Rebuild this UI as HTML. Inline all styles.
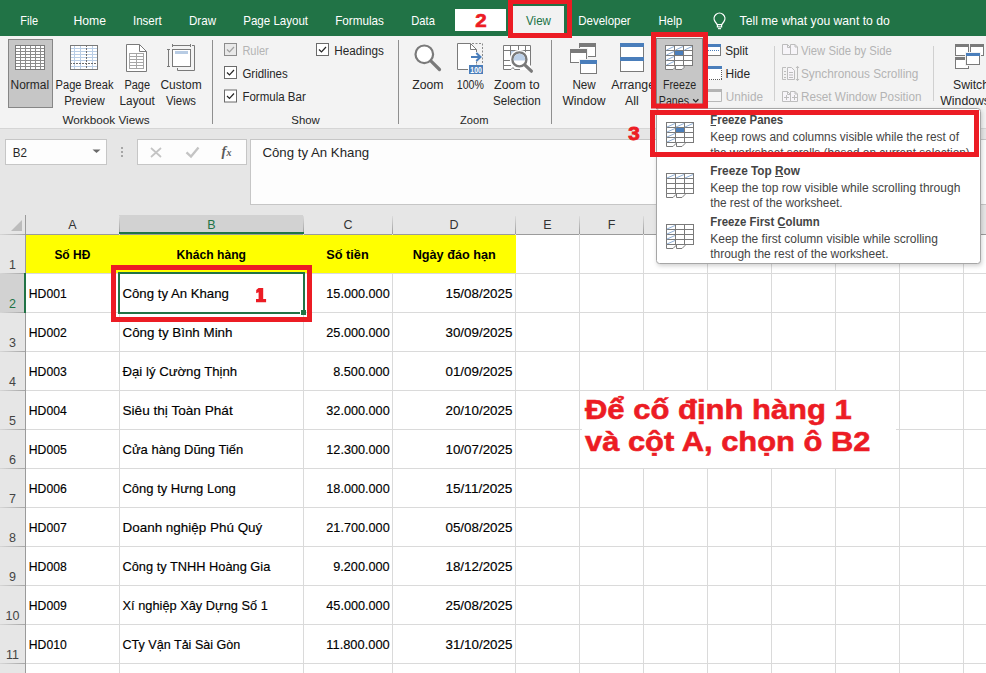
<!DOCTYPE html>
<html><head><meta charset="utf-8"><title>Excel Freeze Panes</title>
<style>
html,body{margin:0;padding:0;background:#fff;overflow:hidden;}
svg{display:block;font-family:"Liberation Sans",sans-serif;}
</style></head><body>
<svg width="986" height="673" viewBox="0 0 986 673">
<rect x="0" y="0" width="986" height="673" fill="#ffffff"/>
<rect x="0" y="36" width="986" height="92" fill="#f3f3f3"/>
<rect x="0" y="128" width="986" height="106" fill="#e6e6e6"/>
<line x1="0" y1="128.5" x2="986" y2="128.5" stroke="#d5d5d5" stroke-width="1"/>
<rect x="0" y="0" width="986" height="36" fill="#217346"/>
<text x="20.3" y="25.2" font-size="13" fill="#ffffff" textLength="17.7" lengthAdjust="spacingAndGlyphs">File</text>
<text x="73.5" y="25.2" font-size="13" fill="#ffffff" textLength="32.5" lengthAdjust="spacingAndGlyphs">Home</text>
<text x="133.0" y="25.2" font-size="13" fill="#ffffff" textLength="28.8" lengthAdjust="spacingAndGlyphs">Insert</text>
<text x="189.0" y="25.2" font-size="13" fill="#ffffff" textLength="27.0" lengthAdjust="spacingAndGlyphs">Draw</text>
<text x="243.2" y="25.2" font-size="13" fill="#ffffff" textLength="64.9" lengthAdjust="spacingAndGlyphs">Page Layout</text>
<text x="335.2" y="25.2" font-size="13" fill="#ffffff" textLength="48.7" lengthAdjust="spacingAndGlyphs">Formulas</text>
<text x="411.3" y="25.2" font-size="13" fill="#ffffff" textLength="23.6" lengthAdjust="spacingAndGlyphs">Data</text>
<rect x="455" y="9" width="51" height="22" fill="#ffffff"/>
<text x="475.3" y="27.1" font-size="19" fill="#ec1c24" font-weight="bold" textLength="11.4" lengthAdjust="spacingAndGlyphs" stroke="#ec1c24" stroke-width="0.7">2</text>
<rect x="513" y="6" width="51" height="28" fill="#f2f2f2"/>
<text x="526.1" y="24.8" font-size="13" fill="#217346" textLength="24.9" lengthAdjust="spacingAndGlyphs">View</text>
<rect x="510.5" y="1.5" width="59" height="34" fill="none" stroke="#ec1c24" stroke-width="5"/>
<text x="578.2" y="25.2" font-size="13" fill="#ffffff" textLength="52.5" lengthAdjust="spacingAndGlyphs">Developer</text>
<text x="658.6" y="25.2" font-size="13" fill="#ffffff" textLength="23.5" lengthAdjust="spacingAndGlyphs">Help</text>
<path d="M717.3 24.6 L715.1 21.6 A5.4 5.4 0 1 1 723.9 21.6 L721.7 24.6" fill="none" stroke="#ffffff" stroke-width="1.3"/>
<rect x="717.4" y="24.6" width="4.2" height="2.3" fill="none" stroke="#ffffff" stroke-width="1.2"/>
<rect x="718" y="28.1" width="3" height="1.1" fill="#ffffff"/>
<text x="739.6" y="24.9" font-size="13" fill="#ffffff" textLength="150.1" lengthAdjust="spacingAndGlyphs">Tell me what you want to do</text>
<rect x="8.5" y="39.5" width="44" height="68" fill="#c6c6c6" stroke="#868686" stroke-width="1"/>
<rect x="15" y="45" width="30" height="25" fill="#ffffff"/>
<line x1="20.5" y1="45" x2="20.5" y2="70" stroke="#8c8c8c" stroke-width="1"/>
<line x1="25.5" y1="45" x2="25.5" y2="70" stroke="#8c8c8c" stroke-width="1"/>
<line x1="30.5" y1="45" x2="30.5" y2="70" stroke="#8c8c8c" stroke-width="1"/>
<line x1="35.5" y1="45" x2="35.5" y2="70" stroke="#8c8c8c" stroke-width="1"/>
<line x1="40.5" y1="45" x2="40.5" y2="70" stroke="#8c8c8c" stroke-width="1"/>
<line x1="15" y1="48.5" x2="45" y2="48.5" stroke="#8c8c8c" stroke-width="1"/>
<line x1="15" y1="51.5" x2="45" y2="51.5" stroke="#8c8c8c" stroke-width="1"/>
<line x1="15" y1="54.5" x2="45" y2="54.5" stroke="#8c8c8c" stroke-width="1"/>
<line x1="15" y1="57.5" x2="45" y2="57.5" stroke="#8c8c8c" stroke-width="1"/>
<line x1="15" y1="60.5" x2="45" y2="60.5" stroke="#8c8c8c" stroke-width="1"/>
<line x1="15" y1="63.5" x2="45" y2="63.5" stroke="#8c8c8c" stroke-width="1"/>
<line x1="15" y1="66.5" x2="45" y2="66.5" stroke="#8c8c8c" stroke-width="1"/>
<rect x="15.5" y="45.5" width="29" height="24" fill="none" stroke="#7a7a7a" stroke-width="1"/>
<text x="10.6" y="89.0" font-size="12" fill="#262626" textLength="38.5" lengthAdjust="spacingAndGlyphs">Normal</text>
<rect x="70" y="45" width="28" height="25" fill="#ffffff"/>
<line x1="74.5" y1="45" x2="74.5" y2="70" stroke="#b9cde5" stroke-width="1"/>
<line x1="80.5" y1="45" x2="80.5" y2="70" stroke="#b9cde5" stroke-width="1"/>
<line x1="92.5" y1="45" x2="92.5" y2="70" stroke="#b9cde5" stroke-width="1"/>
<line x1="70" y1="48.5" x2="98" y2="48.5" stroke="#b9cde5" stroke-width="1"/>
<line x1="70" y1="51.5" x2="98" y2="51.5" stroke="#b9cde5" stroke-width="1"/>
<line x1="70" y1="54.5" x2="98" y2="54.5" stroke="#b9cde5" stroke-width="1"/>
<line x1="70" y1="57.5" x2="98" y2="57.5" stroke="#b9cde5" stroke-width="1"/>
<line x1="70" y1="60.5" x2="98" y2="60.5" stroke="#b9cde5" stroke-width="1"/>
<line x1="70" y1="66.5" x2="98" y2="66.5" stroke="#b9cde5" stroke-width="1"/>
<line x1="86.5" y1="45" x2="86.5" y2="70" stroke="#6d6d6d" stroke-width="1" stroke-dasharray="2 1"/>
<line x1="70" y1="63.5" x2="98" y2="63.5" stroke="#6d6d6d" stroke-width="1" stroke-dasharray="2 1"/>
<rect x="70.5" y="45.5" width="27" height="24" fill="none" stroke="#7a7a7a" stroke-width="1"/>
<text x="55.6" y="89.0" font-size="12" fill="#262626" textLength="57.9" lengthAdjust="spacingAndGlyphs">Page Break</text>
<text x="64.2" y="105.0" font-size="12" fill="#262626" textLength="40.5" lengthAdjust="spacingAndGlyphs">Preview</text>
<path d="M126.5 44.5 H139.5 L146.5 51.5 V71.5 H126.5 Z" fill="#ffffff" stroke="#7a7a7a" stroke-width="1"/>
<path d="M139.5 44.5 V51.5 H146.5" fill="none" stroke="#7a7a7a" stroke-width="1"/>
<rect x="129.5" y="53.5" width="14" height="15" fill="#ffffff" stroke="#a6a6a6" stroke-width="1"/>
<line x1="136.5" y1="53.5" x2="136.5" y2="68.5" stroke="#a6a6a6" stroke-width="1"/>
<line x1="129.5" y1="56.5" x2="143.5" y2="56.5" stroke="#a6a6a6" stroke-width="1"/>
<line x1="129.5" y1="59.5" x2="143.5" y2="59.5" stroke="#a6a6a6" stroke-width="1"/>
<line x1="129.5" y1="62.5" x2="143.5" y2="62.5" stroke="#a6a6a6" stroke-width="1"/>
<line x1="129.5" y1="65.5" x2="143.5" y2="65.5" stroke="#a6a6a6" stroke-width="1"/>
<text x="124.4" y="89.0" font-size="12" fill="#262626" textLength="25.6" lengthAdjust="spacingAndGlyphs">Page</text>
<text x="119.6" y="105.0" font-size="12" fill="#262626" textLength="35.2" lengthAdjust="spacingAndGlyphs">Layout</text>
<line x1="172.5" y1="45.5" x2="190.5" y2="45.5" stroke="#7a7a7a" stroke-width="1"/>
<line x1="172.5" y1="44" x2="172.5" y2="47" stroke="#7a7a7a" stroke-width="1"/>
<line x1="190.5" y1="44" x2="190.5" y2="47" stroke="#7a7a7a" stroke-width="1"/>
<line x1="168.5" y1="49.5" x2="168.5" y2="66.5" stroke="#7a7a7a" stroke-width="1"/>
<line x1="167" y1="49.5" x2="170" y2="49.5" stroke="#7a7a7a" stroke-width="1"/>
<line x1="167" y1="66.5" x2="170" y2="66.5" stroke="#7a7a7a" stroke-width="1"/>
<rect x="172.5" y="49.5" width="18" height="17" fill="#ffffff" stroke="#7a7a7a" stroke-width="1"/>
<rect x="175" y="51" width="13" height="3" fill="#b8cce4"/>
<path d="M192 45.5 H194.5 V70.5 H177.5 V68" fill="none" stroke="#7a7a7a" stroke-width="1"/>
<text x="160.4" y="89.0" font-size="12" fill="#262626" textLength="41.2" lengthAdjust="spacingAndGlyphs">Custom</text>
<text x="166.0" y="105.0" font-size="12" fill="#262626" textLength="30.0" lengthAdjust="spacingAndGlyphs">Views</text>
<text x="62.4" y="124.0" font-size="11.5" fill="#262626" textLength="87.2" lengthAdjust="spacingAndGlyphs">Workbook Views</text>
<line x1="212.5" y1="40" x2="212.5" y2="124" stroke="#8f8f8f" stroke-width="1"/>
<rect x="224.5" y="43.5" width="12" height="12" fill="#e9e9e9" stroke="#8c8c8c" stroke-width="1"/>
<path d="M227 49.5 L229.5 52 L234 47" fill="none" stroke="#a0a0a0" stroke-width="1.2"/>
<text x="242.4" y="55.0" font-size="12" fill="#b4b4b4" textLength="26.4" lengthAdjust="spacingAndGlyphs">Ruler</text>
<rect x="224.5" y="66.5" width="12" height="12" fill="#ffffff" stroke="#6a6a6a" stroke-width="1"/>
<path d="M227 72.5 L229.5 75 L234 70" fill="none" stroke="#262626" stroke-width="1.2"/>
<text x="242.4" y="78.0" font-size="12" fill="#262626" textLength="45.3" lengthAdjust="spacingAndGlyphs">Gridlines</text>
<rect x="224.5" y="90.0" width="12" height="12" fill="#ffffff" stroke="#6a6a6a" stroke-width="1"/>
<path d="M227 96.0 L229.5 98.5 L234 93.5" fill="none" stroke="#262626" stroke-width="1.2"/>
<text x="242.4" y="101.0" font-size="12" fill="#262626" textLength="63.4" lengthAdjust="spacingAndGlyphs">Formula Bar</text>
<rect x="316.5" y="43.5" width="12" height="12" fill="#ffffff" stroke="#6a6a6a" stroke-width="1"/>
<path d="M319 49.5 L321.5 52 L326 47" fill="none" stroke="#262626" stroke-width="1.2"/>
<text x="334.3" y="55.0" font-size="12" fill="#262626" textLength="49.5" lengthAdjust="spacingAndGlyphs">Headings</text>
<text x="291.3" y="124.0" font-size="11.5" fill="#262626" textLength="28.5" lengthAdjust="spacingAndGlyphs">Show</text>
<line x1="398.5" y1="40" x2="398.5" y2="124" stroke="#8f8f8f" stroke-width="1"/>
<circle cx="424.3" cy="54.3" r="8.8" fill="#ffffff" stroke="#7a7a7a" stroke-width="2.2"/>
<line x1="430.8" y1="60.8" x2="439.5" y2="69.5" stroke="#7a7a7a" stroke-width="3.2" stroke-linecap="round"/>
<text x="412.2" y="89.0" font-size="12" fill="#262626" textLength="31.3" lengthAdjust="spacingAndGlyphs">Zoom</text>
<path d="M457.5 43.5 H470.5 L476.5 49.5 V69.5 H457.5 Z" fill="#ffffff"/>
<path d="M468 69.5 H457.5 V43.5 H470.5 L476.5 49.5 V52" fill="none" stroke="#7a7a7a" stroke-width="1"/>
<path d="M470.5 43.5 V49.5 H476.5" fill="none" stroke="#7a7a7a" stroke-width="1"/>
<line x1="476.5" y1="61.5" x2="476.5" y2="65" stroke="#7a7a7a" stroke-width="1" stroke-dasharray="2 1"/>
<path d="M472 43.5 H482.5 V63" fill="none" stroke="#8a8a8a" stroke-width="1" stroke-dasharray="2 1.5"/>
<line x1="471" y1="57" x2="480.5" y2="57" stroke="#4a7ebb" stroke-width="2"/>
<path d="M476.3 53 L480.5 57 L476.3 61" fill="none" stroke="#4a7ebb" stroke-width="2"/>
<rect x="469" y="65" width="14" height="9" fill="#4a7ebb"/>
<text x="470.3" y="72.6" font-size="8.5" fill="#ffffff" font-weight="bold" textLength="11.5" lengthAdjust="spacingAndGlyphs">100</text>
<text x="456.8" y="89.0" font-size="12" fill="#262626" textLength="27.1" lengthAdjust="spacingAndGlyphs">100%</text>
<rect x="503" y="45" width="28" height="25" fill="#ffffff"/>
<rect x="511" y="51" width="7" height="9" fill="#bcd0e8"/>
<path d="M503.5 69.5 V45.5 H530.5 V65.5" fill="none" stroke="#7a7a7a" stroke-width="1"/>
<line x1="503.5" y1="50.5" x2="530.5" y2="50.5" stroke="#7a7a7a" stroke-width="1"/>
<line x1="510.5" y1="45.5" x2="510.5" y2="58" stroke="#7a7a7a" stroke-width="1"/>
<line x1="518.5" y1="45.5" x2="518.5" y2="58" stroke="#7a7a7a" stroke-width="1"/>
<line x1="525.5" y1="45.5" x2="525.5" y2="58" stroke="#7a7a7a" stroke-width="1"/>
<line x1="503.5" y1="60.5" x2="511" y2="60.5" stroke="#7a7a7a" stroke-width="1"/>
<line x1="503.5" y1="65.5" x2="511" y2="65.5" stroke="#7a7a7a" stroke-width="1"/>
<path d="M503.5 69.5 H511 L513 67.5 L514.5 69.5 H520" fill="none" stroke="#7a7a7a" stroke-width="1"/>
<circle cx="519.4" cy="59.4" r="9.6" fill="#ffffff"/>
<circle cx="519.4" cy="59.4" r="7" fill="#ffffff" stroke="#7a7a7a" stroke-width="2.4"/>
<path d="M513.7 60.6 A5.8 5.8 0 1 1 525.1 60.6 Z" fill="#bcd0e8"/>
<line x1="525.3" y1="65.3" x2="531.4" y2="71.2" stroke="#7a7a7a" stroke-width="3.2" stroke-linecap="round"/>
<text x="494.1" y="89.0" font-size="12" fill="#262626" textLength="45.5" lengthAdjust="spacingAndGlyphs">Zoom to</text>
<text x="493.0" y="105.0" font-size="12" fill="#262626" textLength="47.7" lengthAdjust="spacingAndGlyphs">Selection</text>
<text x="460.0" y="124.0" font-size="11.5" fill="#262626" textLength="28.4" lengthAdjust="spacingAndGlyphs">Zoom</text>
<line x1="551.5" y1="40" x2="551.5" y2="124" stroke="#8f8f8f" stroke-width="1"/>
<rect x="579.5" y="43.5" width="16" height="13" fill="#ffffff" stroke="#7a7a7a" stroke-width="1"/>
<rect x="579" y="43" width="17" height="4" fill="#7a7a7a"/>
<rect x="569" y="48" width="19" height="16" fill="#f3f3f3"/>
<rect x="570.5" y="49.5" width="16" height="13" fill="#ffffff" stroke="#7a7a7a" stroke-width="1"/>
<rect x="570" y="49" width="17" height="4" fill="#7a7a7a"/>
<rect x="579" y="59" width="19" height="16" fill="#f3f3f3"/>
<rect x="580.5" y="60.5" width="16" height="13" fill="#ffffff" stroke="#7a7a7a" stroke-width="1"/>
<rect x="580" y="60" width="17" height="4" fill="#4a7ebb"/>
<text x="572.4" y="89.0" font-size="12" fill="#262626" textLength="23.3" lengthAdjust="spacingAndGlyphs">New</text>
<text x="562.4" y="105.0" font-size="12" fill="#262626" textLength="43.1" lengthAdjust="spacingAndGlyphs">Window</text>
<rect x="620.5" y="43.5" width="23" height="28" fill="#ffffff" stroke="#7a7a7a" stroke-width="1"/>
<rect x="620" y="43" width="24" height="4" fill="#4a7ebb"/>
<rect x="620" y="57" width="24" height="4" fill="#4a7ebb"/>
<text x="611.2" y="89.0" font-size="12" fill="#262626" textLength="43.8" lengthAdjust="spacingAndGlyphs">Arrange</text>
<text x="625.0" y="105.0" font-size="12" fill="#262626" textLength="13.8" lengthAdjust="spacingAndGlyphs">All</text>
<rect x="656.5" y="38.5" width="46" height="70" fill="#c6c6c6" stroke="#868686" stroke-width="1"/>
<rect x="665.5" y="45.5" width="27" height="20" fill="#ffffff" stroke="#7a7a7a" stroke-width="1"/>
<line x1="674.5" y1="45.5" x2="674.5" y2="65.5" stroke="#7a7a7a" stroke-width="1"/>
<line x1="683.5" y1="45.5" x2="683.5" y2="65.5" stroke="#7a7a7a" stroke-width="1"/>
<line x1="665.5" y1="50.5" x2="692.5" y2="50.5" stroke="#7a7a7a" stroke-width="1"/>
<line x1="665.5" y1="55.5" x2="692.5" y2="55.5" stroke="#7a7a7a" stroke-width="1"/>
<line x1="665.5" y1="60.5" x2="692.5" y2="60.5" stroke="#7a7a7a" stroke-width="1"/>
<rect x="675" y="51" width="8" height="4" fill="#4a7ebb"/>
<line x1="666.5" y1="50" x2="674" y2="46.5" stroke="#8fb0d8" stroke-width="1"/>
<line x1="675.5" y1="50" x2="683" y2="46.5" stroke="#8fb0d8" stroke-width="1"/>
<line x1="684.5" y1="50" x2="692" y2="46.5" stroke="#8fb0d8" stroke-width="1"/>
<line x1="666.5" y1="55" x2="674" y2="51.5" stroke="#8fb0d8" stroke-width="1"/>
<line x1="666.5" y1="60" x2="674" y2="56.5" stroke="#8fb0d8" stroke-width="1"/>
<line x1="666.5" y1="65" x2="674" y2="61.5" stroke="#8fb0d8" stroke-width="1"/>
<path d="M665.5 65.5 V69.5 H673 L675 67.5 V65.5 Z M675.5 65.5 V69.5 H682 L684 67.5 V65.5 Z" fill="#ffffff" stroke="#7a7a7a" stroke-width="1"/>
<text x="663.0" y="89.0" font-size="12" fill="#262626" textLength="33.2" lengthAdjust="spacingAndGlyphs">Freeze</text>
<text x="658.8" y="105.0" font-size="12" fill="#262626" textLength="30.2" lengthAdjust="spacingAndGlyphs">Panes</text>
<path d="M693.2 99.3 L695.8 101.9 L698.4 99.3" fill="none" stroke="#262626" stroke-width="1.3"/>
<rect x="706" y="44" width="15" height="11" fill="#ffffff"/>
<rect x="706" y="44" width="15" height="3" fill="#4a7ebb"/>
<rect x="708" y="50" width="1" height="1" fill="#4a7ebb"/>
<rect x="710" y="50" width="1" height="1" fill="#4a7ebb"/>
<rect x="712" y="50" width="1" height="1" fill="#4a7ebb"/>
<rect x="714" y="50" width="1" height="1" fill="#4a7ebb"/>
<rect x="716" y="50" width="1" height="1" fill="#4a7ebb"/>
<rect x="718" y="50" width="1" height="1" fill="#4a7ebb"/>
<line x1="720.5" y1="47" x2="720.5" y2="55.5" stroke="#7a7a7a" stroke-width="1"/>
<line x1="706" y1="55.5" x2="721" y2="55.5" stroke="#7a7a7a" stroke-width="1"/>
<text x="725.2" y="55.0" font-size="12" fill="#262626" textLength="22.9" lengthAdjust="spacingAndGlyphs">Split</text>
<rect x="706" y="66" width="16" height="14" fill="#ffffff"/>
<rect x="706" y="66" width="16" height="3" fill="#4a7ebb"/>
<rect x="707" y="79" width="1" height="1" fill="#5a5a5a"/>
<rect x="709" y="79" width="1" height="1" fill="#5a5a5a"/>
<rect x="711" y="79" width="1" height="1" fill="#5a5a5a"/>
<rect x="713" y="79" width="1" height="1" fill="#5a5a5a"/>
<rect x="715" y="79" width="1" height="1" fill="#5a5a5a"/>
<rect x="717" y="79" width="1" height="1" fill="#5a5a5a"/>
<rect x="719" y="79" width="1" height="1" fill="#5a5a5a"/>
<rect x="721" y="79" width="1" height="1" fill="#5a5a5a"/>
<rect x="721" y="70" width="1" height="1" fill="#5a5a5a"/>
<rect x="721" y="72" width="1" height="1" fill="#5a5a5a"/>
<rect x="721" y="74" width="1" height="1" fill="#5a5a5a"/>
<rect x="721" y="76" width="1" height="1" fill="#5a5a5a"/>
<rect x="721" y="78" width="1" height="1" fill="#5a5a5a"/>
<text x="725.5" y="78.0" font-size="12" fill="#262626" textLength="24.6" lengthAdjust="spacingAndGlyphs">Hide</text>
<rect x="706" y="89" width="16" height="13" fill="#f5f5f5"/>
<rect x="706" y="89" width="16" height="3" fill="#b4b4b4"/>
<path d="M721.5 92 V101.5 H706" fill="none" stroke="#b8b8b8" stroke-width="1"/>
<text x="725.8" y="101.0" font-size="12" fill="#b4b4b4" textLength="37.2" lengthAdjust="spacingAndGlyphs">Unhide</text>
<line x1="774.5" y1="46" x2="774.5" y2="101" stroke="#d0d0d0" stroke-width="1"/>
<path d="M782.5 44.5 H787.5 L790.5 47.5 V54.5 H782.5 Z M790.5 44.5 H795 L797.5 47 V54.5 H790.5 Z" fill="#f7f5f9" stroke="#bdbdbd" stroke-width="1"/>
<path d="M787.5 44.5 V47.5 H790.5 M795 44.5 V47 H797.5" fill="none" stroke="#bdbdbd" stroke-width="1"/>
<text x="801.0" y="55.0" font-size="12" fill="#b4b4b4" textLength="90.8" lengthAdjust="spacingAndGlyphs">View Side by Side</text>
<path d="M786 67.5 H782.5 V79.5 H786" fill="none" stroke="#bdbdbd" stroke-width="1"/>
<path d="M784 71.5 H786 M784 74.5 H786 M784 77.5 H786" fill="none" stroke="#bdbdbd" stroke-width="1"/>
<path d="M787.5 67.5 H791.5 L794.5 70.5 V79.5 H787.5 Z" fill="#f7f5f9" stroke="#bdbdbd" stroke-width="1"/>
<path d="M789 72.5 H793 M789 75 H793 M789 77.5 H793" fill="none" stroke="#bdbdbd" stroke-width="1"/>
<line x1="797.5" y1="66.5" x2="797.5" y2="80.5" stroke="#bdbdbd" stroke-width="1"/>
<path d="M796 68 L797.5 66.3 L799 68 M796 79 L797.5 80.7 L799 79" fill="none" stroke="#bdbdbd" stroke-width="1"/>
<text x="801.0" y="78.0" font-size="12" fill="#b4b4b4" textLength="117.4" lengthAdjust="spacingAndGlyphs">Synchronous Scrolling</text>
<path d="M782.5 91.5 H787.5 L790.5 94.5 V101.5 H782.5 Z M790.5 91.5 H795 L797.5 94 V101.5 H790.5 Z" fill="#f7f5f9" stroke="#bdbdbd" stroke-width="1"/>
<path d="M787.5 91.5 V94.5 H790.5 M795 91.5 V94 H797.5" fill="none" stroke="#bdbdbd" stroke-width="1"/>
<path d="M784 97.5 H789 M786.5 95 V100 M792 97.5 H797 M794.5 95 V100" fill="none" stroke="#bdbdbd" stroke-width="1"/>
<text x="801.0" y="101.0" font-size="12" fill="#b4b4b4" textLength="120.5" lengthAdjust="spacingAndGlyphs">Reset Window Position</text>
<line x1="933.5" y1="46" x2="933.5" y2="101" stroke="#d0d0d0" stroke-width="1"/>
<rect x="955.5" y="44.5" width="13" height="11" fill="#ffffff" stroke="#7a7a7a" stroke-width="1"/>
<rect x="955" y="44" width="14" height="3" fill="#7a7a7a"/>
<rect x="970.5" y="44.5" width="13" height="11" fill="#ffffff" stroke="#7a7a7a" stroke-width="1"/>
<rect x="970" y="44" width="14" height="3" fill="#7a7a7a"/>
<rect x="955.5" y="57.5" width="13" height="11" fill="#ffffff" stroke="#7a7a7a" stroke-width="1"/>
<rect x="955" y="57" width="14" height="3" fill="#7a7a7a"/>
<rect x="965" y="52" width="16" height="14" fill="#f3f3f3"/>
<rect x="966.5" y="53.5" width="13" height="11" fill="#ffffff" stroke="#7a7a7a" stroke-width="1"/>
<rect x="966" y="53" width="14" height="3" fill="#4a7ebb"/>
<text x="953.0" y="89.0" font-size="12" fill="#262626" textLength="36.0" lengthAdjust="spacingAndGlyphs">Switch</text>
<text x="940.3" y="105.0" font-size="12" fill="#262626" textLength="49.7" lengthAdjust="spacingAndGlyphs">Windows</text>
<rect x="5.5" y="139.5" width="101" height="25" fill="#fdfdfd" stroke="#c6c6c6" stroke-width="1"/>
<text x="12.7" y="156.6" font-size="13" fill="#262626" textLength="14.2" lengthAdjust="spacingAndGlyphs">B2</text>
<path d="M92.5 149.5 H100.5 L96.5 153 Z" fill="#6a6a6a"/>
<rect x="121" y="147" width="2" height="2" fill="#a6a6a6"/>
<rect x="121" y="151" width="2" height="2" fill="#a6a6a6"/>
<rect x="121" y="155" width="2" height="2" fill="#a6a6a6"/>
<rect x="137.5" y="139.5" width="109" height="25" fill="#fdfdfd" stroke="#c6c6c6" stroke-width="1"/>
<path d="M151 148 L161 157 M161 148 L151 157" fill="none" stroke="#c4c4c4" stroke-width="1.7"/>
<path d="M186.5 152.3 L191 156.6 L198.5 147.5" fill="none" stroke="#c4c4c4" stroke-width="2.3"/>
<text x="221.5" y="155.5" font-size="14" fill="#5a5a5a" font-weight="bold" font-style="italic" font-family="Liberation Serif">f<tspan font-size="10" dx="0.3">x</tspan></text>
<rect x="250.5" y="139.5" width="740" height="65" fill="#fdfdfd" stroke="#c6c6c6" stroke-width="1"/>
<text x="262.4" y="157.2" font-size="13.5" fill="#262626" textLength="106.8" lengthAdjust="spacingAndGlyphs">Công ty An Khang</text>
<defs><linearGradient id="hg" x1="0" y1="0" x2="0" y2="1"><stop offset="0" stop-color="#dcdcdc"/><stop offset="1" stop-color="#9a9a9a"/></linearGradient><linearGradient id="vg" x1="0" y1="0" x2="1" y2="0"><stop offset="0" stop-color="#d6d6d6"/><stop offset="1" stop-color="#a6a6a6"/></linearGradient></defs>
<rect x="0" y="215" width="986" height="19" fill="#e6e6e6"/>
<rect x="119" y="215" width="184" height="19" fill="#d2d2d2"/>
<rect x="119" y="216" width="1" height="18" fill="url(#hg)"/>
<rect x="303" y="216" width="1" height="18" fill="url(#hg)"/>
<rect x="392" y="216" width="1" height="18" fill="url(#hg)"/>
<rect x="515" y="216" width="1" height="18" fill="url(#hg)"/>
<rect x="579" y="216" width="1" height="18" fill="url(#hg)"/>
<rect x="643" y="216" width="1" height="18" fill="url(#hg)"/>
<rect x="707" y="216" width="1" height="18" fill="url(#hg)"/>
<rect x="771" y="216" width="1" height="18" fill="url(#hg)"/>
<rect x="835" y="216" width="1" height="18" fill="url(#hg)"/>
<rect x="899" y="216" width="1" height="18" fill="url(#hg)"/>
<rect x="963" y="216" width="1" height="18" fill="url(#hg)"/>
<rect x="1027" y="216" width="1" height="18" fill="url(#hg)"/>
<line x1="0" y1="234.5" x2="986" y2="234.5" stroke="#9b9b9b" stroke-width="1"/>
<rect x="119" y="232" width="185" height="2" fill="#217346"/>
<path d="M22 220 V231 H11 Z" fill="#bcbcbc"/>
<text x="72.5" y="229" font-size="12.5" fill="#333" text-anchor="middle">A</text>
<text x="211.5" y="229" font-size="12.5" fill="#217346" text-anchor="middle">B</text>
<text x="348.0" y="229" font-size="12.5" fill="#333" text-anchor="middle">C</text>
<text x="454.0" y="229" font-size="12.5" fill="#333" text-anchor="middle">D</text>
<text x="547.5" y="229" font-size="12.5" fill="#333" text-anchor="middle">E</text>
<text x="611.5" y="229" font-size="12.5" fill="#333" text-anchor="middle">F</text>
<text x="675.5" y="229" font-size="12.5" fill="#333" text-anchor="middle">G</text>
<text x="739.5" y="229" font-size="12.5" fill="#333" text-anchor="middle">H</text>
<text x="803.5" y="229" font-size="12.5" fill="#333" text-anchor="middle">I</text>
<text x="867.5" y="229" font-size="12.5" fill="#333" text-anchor="middle">J</text>
<text x="931.5" y="229" font-size="12.5" fill="#333" text-anchor="middle">K</text>
<text x="995.5" y="229" font-size="12.5" fill="#333" text-anchor="middle">L</text>
<rect x="0" y="234" width="25" height="439" fill="#e6e6e6"/>
<rect x="0" y="273" width="25" height="39" fill="#d2d2d2"/>
<rect x="0" y="234" width="25" height="1" fill="url(#vg)"/>
<rect x="0" y="273" width="25" height="1" fill="url(#vg)"/>
<rect x="0" y="312" width="25" height="1" fill="url(#vg)"/>
<rect x="0" y="351" width="25" height="1" fill="url(#vg)"/>
<rect x="0" y="390" width="25" height="1" fill="url(#vg)"/>
<rect x="0" y="429" width="25" height="1" fill="url(#vg)"/>
<rect x="0" y="468" width="25" height="1" fill="url(#vg)"/>
<rect x="0" y="507" width="25" height="1" fill="url(#vg)"/>
<rect x="0" y="546" width="25" height="1" fill="url(#vg)"/>
<rect x="0" y="585" width="25" height="1" fill="url(#vg)"/>
<rect x="0" y="624" width="25" height="1" fill="url(#vg)"/>
<rect x="0" y="663" width="25" height="1" fill="url(#vg)"/>
<line x1="25.5" y1="215" x2="25.5" y2="673" stroke="#9b9b9b" stroke-width="1"/>
<rect x="24" y="273" width="2" height="40" fill="#217346"/>
<text x="12.5" y="269" font-size="12.5" fill="#444" text-anchor="middle">1</text>
<text x="12.5" y="308" font-size="12.5" fill="#217346" text-anchor="middle">2</text>
<text x="12.5" y="347" font-size="12.5" fill="#444" text-anchor="middle">3</text>
<text x="12.5" y="386" font-size="12.5" fill="#444" text-anchor="middle">4</text>
<text x="12.5" y="425" font-size="12.5" fill="#444" text-anchor="middle">5</text>
<text x="12.5" y="464" font-size="12.5" fill="#444" text-anchor="middle">6</text>
<text x="12.5" y="503" font-size="12.5" fill="#444" text-anchor="middle">7</text>
<text x="12.5" y="542" font-size="12.5" fill="#444" text-anchor="middle">8</text>
<text x="12.5" y="581" font-size="12.5" fill="#444" text-anchor="middle">9</text>
<text x="12.5" y="620" font-size="12.5" fill="#444" text-anchor="middle">10</text>
<text x="12.5" y="659" font-size="12.5" fill="#444" text-anchor="middle">11</text>
<line x1="119.5" y1="234" x2="119.5" y2="673" stroke="#dadada" stroke-width="1"/>
<line x1="303.5" y1="234" x2="303.5" y2="673" stroke="#dadada" stroke-width="1"/>
<line x1="392.5" y1="234" x2="392.5" y2="673" stroke="#dadada" stroke-width="1"/>
<line x1="515.5" y1="234" x2="515.5" y2="673" stroke="#dadada" stroke-width="1"/>
<line x1="579.5" y1="234" x2="579.5" y2="673" stroke="#dadada" stroke-width="1"/>
<line x1="643.5" y1="234" x2="643.5" y2="673" stroke="#dadada" stroke-width="1"/>
<line x1="707.5" y1="234" x2="707.5" y2="673" stroke="#dadada" stroke-width="1"/>
<line x1="771.5" y1="234" x2="771.5" y2="673" stroke="#dadada" stroke-width="1"/>
<line x1="835.5" y1="234" x2="835.5" y2="673" stroke="#dadada" stroke-width="1"/>
<line x1="899.5" y1="234" x2="899.5" y2="673" stroke="#dadada" stroke-width="1"/>
<line x1="963.5" y1="234" x2="963.5" y2="673" stroke="#dadada" stroke-width="1"/>
<line x1="1027.5" y1="234" x2="1027.5" y2="673" stroke="#dadada" stroke-width="1"/>
<line x1="26" y1="273.5" x2="986" y2="273.5" stroke="#dadada" stroke-width="1"/>
<line x1="26" y1="312.5" x2="986" y2="312.5" stroke="#dadada" stroke-width="1"/>
<line x1="26" y1="351.5" x2="986" y2="351.5" stroke="#dadada" stroke-width="1"/>
<line x1="26" y1="390.5" x2="986" y2="390.5" stroke="#dadada" stroke-width="1"/>
<line x1="26" y1="429.5" x2="986" y2="429.5" stroke="#dadada" stroke-width="1"/>
<line x1="26" y1="468.5" x2="986" y2="468.5" stroke="#dadada" stroke-width="1"/>
<line x1="26" y1="507.5" x2="986" y2="507.5" stroke="#dadada" stroke-width="1"/>
<line x1="26" y1="546.5" x2="986" y2="546.5" stroke="#dadada" stroke-width="1"/>
<line x1="26" y1="585.5" x2="986" y2="585.5" stroke="#dadada" stroke-width="1"/>
<line x1="26" y1="624.5" x2="986" y2="624.5" stroke="#dadada" stroke-width="1"/>
<line x1="26" y1="663.5" x2="986" y2="663.5" stroke="#dadada" stroke-width="1"/>
<rect x="26" y="235" width="490" height="38" fill="#ffff00"/>
<text x="54.4" y="259.0" font-size="13" fill="#000000" font-weight="bold" textLength="35.9" lengthAdjust="spacingAndGlyphs">Số HĐ</text>
<text x="176.6" y="259.0" font-size="13" fill="#000000" font-weight="bold" textLength="69.4" lengthAdjust="spacingAndGlyphs">Khách hàng</text>
<text x="326.3" y="259.0" font-size="13" fill="#000000" font-weight="bold" textLength="42.4" lengthAdjust="spacingAndGlyphs">Số tiền</text>
<text x="412.7" y="259.0" font-size="13" fill="#000000" font-weight="bold" textLength="83.0" lengthAdjust="spacingAndGlyphs">Ngày đáo hạn</text>
<text x="28.8" y="298.0" font-size="13" fill="#000000" textLength="37.9" lengthAdjust="spacingAndGlyphs" stroke="#000000" stroke-width="0.15">HD001</text>
<text x="122.5" y="298.0" font-size="13" fill="#000000" textLength="106.4" lengthAdjust="spacingAndGlyphs" stroke="#000000" stroke-width="0.15">Công ty An Khang</text>
<text x="326.3" y="298.0" font-size="13" fill="#000000" textLength="63.4" lengthAdjust="spacingAndGlyphs" stroke="#000000" stroke-width="0.15">15.000.000</text>
<text x="445.5" y="298.0" font-size="13" fill="#000000" textLength="66.9" lengthAdjust="spacingAndGlyphs" stroke="#000000" stroke-width="0.15">15/08/2025</text>
<text x="28.8" y="337.0" font-size="13" fill="#000000" textLength="37.9" lengthAdjust="spacingAndGlyphs" stroke="#000000" stroke-width="0.15">HD002</text>
<text x="122.5" y="337.0" font-size="13" fill="#000000" textLength="110.0" lengthAdjust="spacingAndGlyphs" stroke="#000000" stroke-width="0.15">Công ty Bình Minh</text>
<text x="326.3" y="337.0" font-size="13" fill="#000000" textLength="63.4" lengthAdjust="spacingAndGlyphs" stroke="#000000" stroke-width="0.15">25.000.000</text>
<text x="445.5" y="337.0" font-size="13" fill="#000000" textLength="66.9" lengthAdjust="spacingAndGlyphs" stroke="#000000" stroke-width="0.15">30/09/2025</text>
<text x="28.8" y="376.0" font-size="13" fill="#000000" textLength="37.9" lengthAdjust="spacingAndGlyphs" stroke="#000000" stroke-width="0.15">HD003</text>
<text x="122.5" y="376.0" font-size="13" fill="#000000" textLength="114.7" lengthAdjust="spacingAndGlyphs" stroke="#000000" stroke-width="0.15">Đại lý Cường Thịnh</text>
<text x="333.2" y="376.0" font-size="13" fill="#000000" textLength="56.5" lengthAdjust="spacingAndGlyphs" stroke="#000000" stroke-width="0.15">8.500.000</text>
<text x="445.5" y="376.0" font-size="13" fill="#000000" textLength="66.9" lengthAdjust="spacingAndGlyphs" stroke="#000000" stroke-width="0.15">01/09/2025</text>
<text x="28.8" y="415.0" font-size="13" fill="#000000" textLength="37.9" lengthAdjust="spacingAndGlyphs" stroke="#000000" stroke-width="0.15">HD004</text>
<text x="122.5" y="415.0" font-size="13" fill="#000000" textLength="110.2" lengthAdjust="spacingAndGlyphs" stroke="#000000" stroke-width="0.15">Siêu thị Toàn Phát</text>
<text x="326.3" y="415.0" font-size="13" fill="#000000" textLength="63.4" lengthAdjust="spacingAndGlyphs" stroke="#000000" stroke-width="0.15">32.000.000</text>
<text x="445.5" y="415.0" font-size="13" fill="#000000" textLength="66.9" lengthAdjust="spacingAndGlyphs" stroke="#000000" stroke-width="0.15">20/10/2025</text>
<text x="28.8" y="454.0" font-size="13" fill="#000000" textLength="37.9" lengthAdjust="spacingAndGlyphs" stroke="#000000" stroke-width="0.15">HD005</text>
<text x="122.5" y="454.0" font-size="13" fill="#000000" textLength="120.8" lengthAdjust="spacingAndGlyphs" stroke="#000000" stroke-width="0.15">Cửa hàng Dũng Tiến</text>
<text x="326.3" y="454.0" font-size="13" fill="#000000" textLength="63.4" lengthAdjust="spacingAndGlyphs" stroke="#000000" stroke-width="0.15">12.300.000</text>
<text x="445.5" y="454.0" font-size="13" fill="#000000" textLength="66.9" lengthAdjust="spacingAndGlyphs" stroke="#000000" stroke-width="0.15">10/07/2025</text>
<text x="28.8" y="493.0" font-size="13" fill="#000000" textLength="37.9" lengthAdjust="spacingAndGlyphs" stroke="#000000" stroke-width="0.15">HD006</text>
<text x="122.5" y="493.0" font-size="13" fill="#000000" textLength="113.3" lengthAdjust="spacingAndGlyphs" stroke="#000000" stroke-width="0.15">Công ty Hưng Long</text>
<text x="326.3" y="493.0" font-size="13" fill="#000000" textLength="63.4" lengthAdjust="spacingAndGlyphs" stroke="#000000" stroke-width="0.15">18.000.000</text>
<text x="445.5" y="493.0" font-size="13" fill="#000000" textLength="66.9" lengthAdjust="spacingAndGlyphs" stroke="#000000" stroke-width="0.15">15/11/2025</text>
<text x="28.8" y="532.0" font-size="13" fill="#000000" textLength="37.9" lengthAdjust="spacingAndGlyphs" stroke="#000000" stroke-width="0.15">HD007</text>
<text x="122.5" y="532.0" font-size="13" fill="#000000" textLength="139.8" lengthAdjust="spacingAndGlyphs" stroke="#000000" stroke-width="0.15">Doanh nghiệp Phú Quý</text>
<text x="326.3" y="532.0" font-size="13" fill="#000000" textLength="63.4" lengthAdjust="spacingAndGlyphs" stroke="#000000" stroke-width="0.15">21.700.000</text>
<text x="445.5" y="532.0" font-size="13" fill="#000000" textLength="66.9" lengthAdjust="spacingAndGlyphs" stroke="#000000" stroke-width="0.15">05/08/2025</text>
<text x="28.8" y="571.0" font-size="13" fill="#000000" textLength="37.9" lengthAdjust="spacingAndGlyphs" stroke="#000000" stroke-width="0.15">HD008</text>
<text x="122.5" y="571.0" font-size="13" fill="#000000" textLength="147.8" lengthAdjust="spacingAndGlyphs" stroke="#000000" stroke-width="0.15">Công ty TNHH Hoàng Gia</text>
<text x="333.2" y="571.0" font-size="13" fill="#000000" textLength="56.5" lengthAdjust="spacingAndGlyphs" stroke="#000000" stroke-width="0.15">9.200.000</text>
<text x="445.5" y="571.0" font-size="13" fill="#000000" textLength="66.9" lengthAdjust="spacingAndGlyphs" stroke="#000000" stroke-width="0.15">18/12/2025</text>
<text x="28.8" y="610.0" font-size="13" fill="#000000" textLength="37.9" lengthAdjust="spacingAndGlyphs" stroke="#000000" stroke-width="0.15">HD009</text>
<text x="122.5" y="610.0" font-size="13" fill="#000000" textLength="145.3" lengthAdjust="spacingAndGlyphs" stroke="#000000" stroke-width="0.15">Xí nghiệp Xây Dựng Số 1</text>
<text x="326.3" y="610.0" font-size="13" fill="#000000" textLength="63.4" lengthAdjust="spacingAndGlyphs" stroke="#000000" stroke-width="0.15">45.000.000</text>
<text x="445.5" y="610.0" font-size="13" fill="#000000" textLength="66.9" lengthAdjust="spacingAndGlyphs" stroke="#000000" stroke-width="0.15">25/08/2025</text>
<text x="28.8" y="649.0" font-size="13" fill="#000000" textLength="37.9" lengthAdjust="spacingAndGlyphs" stroke="#000000" stroke-width="0.15">HD010</text>
<text x="122.5" y="649.0" font-size="13" fill="#000000" textLength="117.8" lengthAdjust="spacingAndGlyphs" stroke="#000000" stroke-width="0.15">CTy Vận Tải Sài Gòn</text>
<text x="326.3" y="649.0" font-size="13" fill="#000000" textLength="63.4" lengthAdjust="spacingAndGlyphs" stroke="#000000" stroke-width="0.15">11.800.000</text>
<text x="445.5" y="649.0" font-size="13" fill="#000000" textLength="66.9" lengthAdjust="spacingAndGlyphs" stroke="#000000" stroke-width="0.15">31/10/2025</text>
<rect x="119" y="273" width="185" height="40" fill="none" stroke="#217346" stroke-width="2"/>
<rect x="301" y="310" width="5" height="5" fill="#217346"/>
<rect x="300" y="309" width="1" height="6" fill="#ffffff"/>
<rect x="113.5" y="267.5" width="196" height="52" fill="none" stroke="#ec1c24" stroke-width="5"/>
<path d="M258.5 288 H263.2 V298.9 H266.1 V302.2 H256 V298.9 H258.6 V292.3 L256.2 293.3 V290.1 Z" fill="#ec1c24"/>
<rect x="582" y="391" width="314" height="77" fill="#ffffff"/>
<text x="585.0" y="419.0" font-size="28.5" fill="#ec1c24" font-weight="bold" textLength="266.8" lengthAdjust="spacingAndGlyphs" stroke="#ec1c24" stroke-width="0.6">Để cố định hàng 1</text>
<text x="585.0" y="451.4" font-size="28.5" fill="#ec1c24" font-weight="bold" textLength="285.4" lengthAdjust="spacingAndGlyphs" stroke="#ec1c24" stroke-width="0.6">và cột A, chọn ô B2</text>
<defs><filter id="sh" x="-5%" y="-5%" width="110%" height="115%"><feGaussianBlur stdDeviation="2"/></filter></defs>
<rect x="657" y="110" width="325" height="156" fill="rgba(0,0,0,0.18)" rx="4" filter="url(#sh)"/>
<rect x="656.5" y="108.5" width="324" height="155" fill="#ffffff" stroke="#a6a6a6" stroke-width="1" rx="3"/>
<rect x="666.5" y="122.5" width="27" height="20" fill="#ffffff" stroke="#7a7a7a" stroke-width="1"/>
<line x1="675.5" y1="122.5" x2="675.5" y2="142.5" stroke="#7a7a7a" stroke-width="1"/>
<line x1="684.5" y1="122.5" x2="684.5" y2="142.5" stroke="#7a7a7a" stroke-width="1"/>
<line x1="666.5" y1="127.5" x2="693.5" y2="127.5" stroke="#7a7a7a" stroke-width="1"/>
<line x1="666.5" y1="132.5" x2="693.5" y2="132.5" stroke="#7a7a7a" stroke-width="1"/>
<line x1="666.5" y1="137.5" x2="693.5" y2="137.5" stroke="#7a7a7a" stroke-width="1"/>
<line x1="667" y1="132" x2="675" y2="128.5" stroke="#8fb0d8" stroke-width="1"/>
<line x1="667" y1="127" x2="675" y2="123.5" stroke="#8fb0d8" stroke-width="1"/>
<line x1="667" y1="142" x2="675" y2="138.5" stroke="#8fb0d8" stroke-width="1"/>
<line x1="685" y1="127" x2="693" y2="123.5" stroke="#8fb0d8" stroke-width="1"/>
<line x1="667" y1="137" x2="675" y2="133.5" stroke="#8fb0d8" stroke-width="1"/>
<line x1="676" y1="127" x2="684" y2="123.5" stroke="#8fb0d8" stroke-width="1"/>
<rect x="676" y="128" width="8" height="4" fill="#4a7ebb"/>
<path d="M666.5 142.5 V146.5 H673 L676 143.5 V142.5 Z M676.5 142.5 V146.5 H682 L685 143.5 V142.5 Z" fill="#ffffff" stroke="#7a7a7a" stroke-width="1"/>
<text x="710.3" y="124.0" font-size="12" fill="#444444" font-weight="bold" textLength="72.8" lengthAdjust="spacingAndGlyphs">Freeze Panes</text>
<line x1="710.5" y1="125.5" x2="716" y2="125.5" stroke="#444444" stroke-width="1"/>
<text x="710.2" y="141.0" font-size="12" fill="#444444" textLength="248.8" lengthAdjust="spacingAndGlyphs">Keep rows and columns visible while the rest of</text>
<clipPath id="c1"><rect x="650" y="108" width="336" height="44"/></clipPath>
<g clip-path="url(#c1)">
<text x="710.2" y="157.0" font-size="12" fill="#444444" textLength="259.5" lengthAdjust="spacingAndGlyphs">the worksheet scrolls (based on current selection)</text>
</g>
<rect x="666.5" y="173.5" width="27" height="20" fill="#ffffff" stroke="#7a7a7a" stroke-width="1"/>
<line x1="675.5" y1="173.5" x2="675.5" y2="193.5" stroke="#7a7a7a" stroke-width="1"/>
<line x1="684.5" y1="173.5" x2="684.5" y2="193.5" stroke="#7a7a7a" stroke-width="1"/>
<line x1="666.5" y1="178.5" x2="693.5" y2="178.5" stroke="#7a7a7a" stroke-width="1"/>
<line x1="666.5" y1="183.5" x2="693.5" y2="183.5" stroke="#7a7a7a" stroke-width="1"/>
<line x1="666.5" y1="188.5" x2="693.5" y2="188.5" stroke="#7a7a7a" stroke-width="1"/>
<line x1="676" y1="178" x2="684" y2="174.5" stroke="#8fb0d8" stroke-width="1"/>
<line x1="685" y1="178" x2="693" y2="174.5" stroke="#8fb0d8" stroke-width="1"/>
<line x1="667" y1="178" x2="675" y2="174.5" stroke="#8fb0d8" stroke-width="1"/>
<path d="M666.5 193.5 V197.5 H673 L676 194.5 V193.5 Z M676.5 193.5 V197.5 H682 L685 194.5 V193.5 Z" fill="#ffffff" stroke="#7a7a7a" stroke-width="1"/>
<text x="710.3" y="175.3" font-size="12" fill="#444444" font-weight="bold" textLength="89.7" lengthAdjust="spacingAndGlyphs">Freeze Top Row</text>
<line x1="775" y1="176.5" x2="783" y2="176.5" stroke="#444444" stroke-width="1"/>
<text x="710.2" y="192.0" font-size="12" fill="#444444" textLength="250.2" lengthAdjust="spacingAndGlyphs">Keep the top row visible while scrolling through</text>
<text x="710.2" y="207.0" font-size="12" fill="#444444" textLength="132.3" lengthAdjust="spacingAndGlyphs">the rest of the worksheet.</text>
<rect x="666.5" y="224.5" width="27" height="20" fill="#ffffff" stroke="#7a7a7a" stroke-width="1"/>
<line x1="675.5" y1="224.5" x2="675.5" y2="244.5" stroke="#7a7a7a" stroke-width="1"/>
<line x1="684.5" y1="224.5" x2="684.5" y2="244.5" stroke="#7a7a7a" stroke-width="1"/>
<line x1="666.5" y1="229.5" x2="693.5" y2="229.5" stroke="#7a7a7a" stroke-width="1"/>
<line x1="666.5" y1="234.5" x2="693.5" y2="234.5" stroke="#7a7a7a" stroke-width="1"/>
<line x1="666.5" y1="239.5" x2="693.5" y2="239.5" stroke="#7a7a7a" stroke-width="1"/>
<line x1="667" y1="234" x2="675" y2="230.5" stroke="#8fb0d8" stroke-width="1"/>
<line x1="667" y1="239" x2="675" y2="235.5" stroke="#8fb0d8" stroke-width="1"/>
<line x1="667" y1="244" x2="675" y2="240.5" stroke="#8fb0d8" stroke-width="1"/>
<line x1="667" y1="229" x2="675" y2="225.5" stroke="#8fb0d8" stroke-width="1"/>
<path d="M666.5 244.5 V248.5 H673 L676 245.5 V244.5 Z M676.5 244.5 V248.5 H682 L685 245.5 V244.5 Z" fill="#ffffff" stroke="#7a7a7a" stroke-width="1"/>
<text x="710.3" y="226.4" font-size="12" fill="#444444" font-weight="bold" textLength="109.4" lengthAdjust="spacingAndGlyphs">Freeze First Column</text>
<line x1="778.5" y1="227.5" x2="785.5" y2="227.5" stroke="#444444" stroke-width="1"/>
<text x="710.2" y="243.0" font-size="12" fill="#444444" textLength="227.7" lengthAdjust="spacingAndGlyphs">Keep the first column visible while scrolling</text>
<text x="710.2" y="258.0" font-size="12" fill="#444444" textLength="178.3" lengthAdjust="spacingAndGlyphs">through the rest of the worksheet.</text>
<rect x="652.5" y="112.5" width="324" height="42" fill="none" stroke="#ec1c24" stroke-width="5"/>
<text x="628.2" y="140.2" font-size="19" fill="#ec1c24" font-weight="bold" textLength="11.5" lengthAdjust="spacingAndGlyphs" stroke="#ec1c24" stroke-width="0.9">3</text>
<rect x="653.5" y="34.5" width="52" height="71.5" fill="none" stroke="#ec1c24" stroke-width="5"/>
</svg>
</body></html>
